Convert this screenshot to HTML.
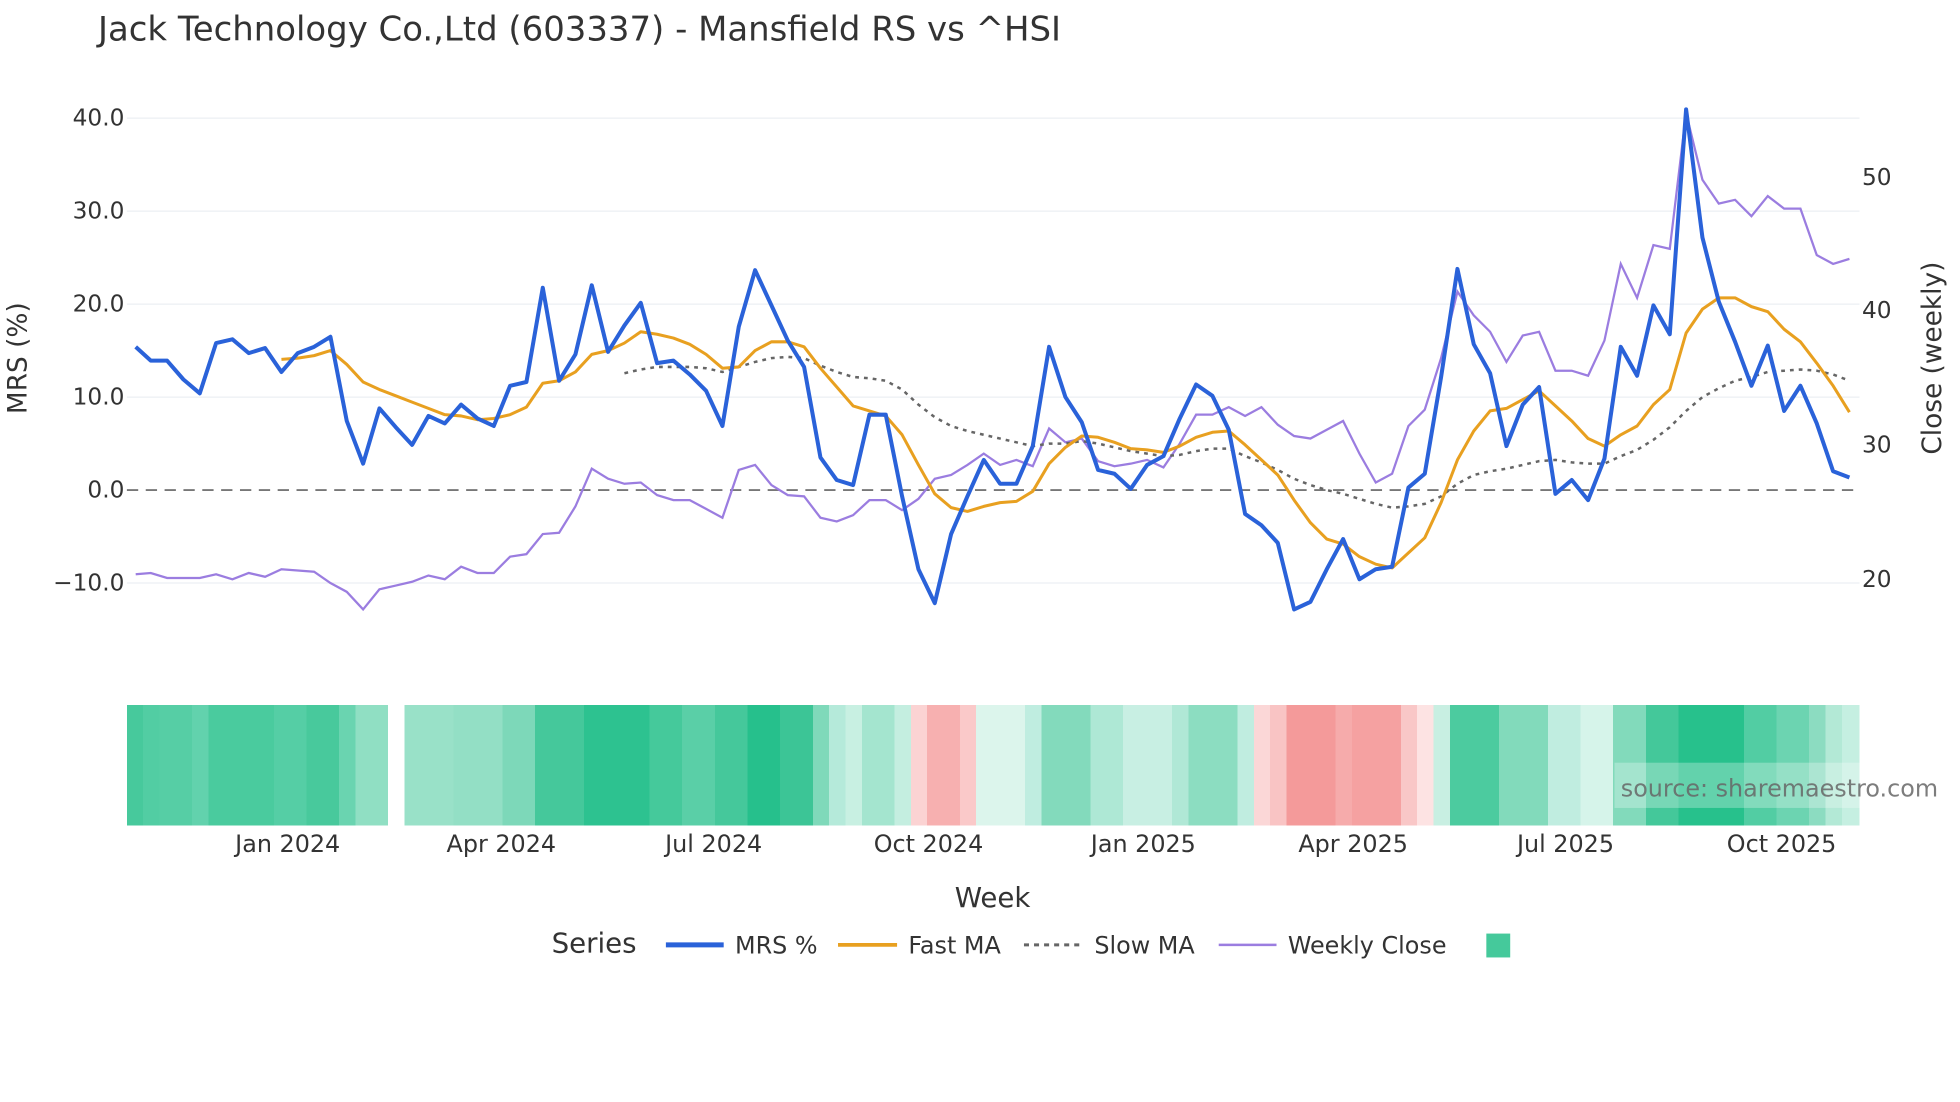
<!DOCTYPE html>
<html><head><meta charset="utf-8"><style>
html,body{margin:0;padding:0;background:#fff;width:1960px;height:1102px;overflow:hidden}
svg{display:block}
text{font-family:"DejaVu Sans","Liberation Sans",sans-serif;fill:#333}
</style></head><body>
<svg width="1960" height="1102" viewBox="0 0 1560 877" xmlns="http://www.w3.org/2000/svg">
<rect width="1560" height="877" fill="#fff"/>
<text x="78" y="32" font-size="27">Jack Technology Co.,Ltd (603337) - Mansfield RS vs ^HSI</text>
<g stroke="#eceff3" stroke-width="1">
<line x1="101" y1="94" x2="1480" y2="94"/><line x1="101" y1="168" x2="1480" y2="168"/>
<line x1="101" y1="242" x2="1480" y2="242"/><line x1="101" y1="316" x2="1480" y2="316"/>
<line x1="101" y1="464" x2="1480" y2="464"/>
</g>
<g font-size="18.5" text-anchor="end">
<text x="99" y="100">40.0</text><text x="99" y="174">30.0</text>
<text x="99" y="248">20.0</text><text x="99" y="322">10.0</text>
<text x="99" y="396">0.0</text><text x="99" y="470">−10.0</text>
</g>
<g font-size="18.5">
<text x="1482" y="147">50</text><text x="1482" y="253">40</text>
<text x="1482" y="360">30</text><text x="1482" y="467">20</text>
</g>
<text transform="translate(21,285) rotate(-90)" font-size="21" text-anchor="middle">MRS (%)</text>
<text transform="translate(1545,285) rotate(-90)" font-size="21" text-anchor="middle">Close (weekly)</text>
<line x1="101" y1="390" x2="1480" y2="390" stroke="#777" stroke-width="1.5" stroke-dasharray="9,6"/>
<polyline fill="none" stroke="#9b7de0" stroke-width="1.8" points="108,457 120,456 133,460 146,460 159,460 172,457 185,461 198,456 211,459 224,453 237,454 250,455 263,464 276,471 289,485 302,469 315,466 328,463 341,458 354,461 367,451 380,456 393,456 406,443 419,441 432,425 445,424 458,403 471,373 484,381 497,385 510,384 523,394 536,398 549,398 562,405 575,412 588,374 601,370 614,386 627,394 640,395 653,412 666,415 679,410 692,398 705,398 718,406 731,397 744,381 757,378 770,370 783,361 796,370 809,366 822,371 835,341 848,352 861,349 874,367 887,371 900,369 913,366 926,372 939,353 952,330 965,330 978,324 991,331 1004,324 1017,338 1030,347 1043,349 1056,342 1069,335 1082,361 1095,384 1108,377 1121,339 1134,326 1147,285 1160,232 1173,251 1186,264 1199,288 1212,267 1225,264 1238,295 1251,295 1264,299 1277,271 1290,210 1303,237 1316,195 1329,198 1342,90 1355,143 1368,162 1381,159 1394,172 1407,156 1420,166 1433,166 1446,203 1459,210 1472,206"/>
<polyline fill="none" stroke="#666" stroke-width="2" stroke-dasharray="3,4" points="497,297 510,294 523,292 536,292 549,292 562,293 575,296 588,292 601,288 614,285 627,284 640,285 653,291 666,296 679,300 692,301 705,303 718,310 731,322 744,332 757,339 770,343 783,346 796,349 809,352 822,355 835,353 848,353 861,351 874,353 887,356 900,359 913,361 926,363 939,362 952,359 965,357 978,357 991,363 1004,368 1017,374 1030,381 1043,386 1056,390 1069,393 1082,397 1095,401 1108,404 1121,403 1134,401 1147,395 1160,385 1173,378 1186,375 1199,373 1212,370 1225,367 1238,366 1251,368 1264,369 1277,369 1290,363 1303,358 1316,350 1329,340 1342,327 1355,316 1368,309 1381,303 1394,300 1407,296 1420,295 1433,294 1446,295 1459,298 1472,303"/>
<polyline fill="none" stroke="#e8a020" stroke-width="2.4" stroke-linejoin="round" points="224,286 237,285 250,283 263,279 276,290 289,304 302,310 315,315 328,320 341,325 354,330 367,331 380,334 393,333 406,330 419,324 432,305 445,303 458,296 471,282 484,279 497,273 510,264 523,266 536,269 549,274 562,282 575,293 588,292 601,279 614,272 627,272 640,276 653,293 666,308 679,323 692,327 705,331 718,346 731,370 744,393 757,404 770,407 783,403 796,400 809,399 822,391 835,369 848,356 861,347 874,348 887,352 900,357 913,358 926,360 939,355 952,348 965,344 978,343 991,354 1004,366 1017,378 1030,398 1043,416 1056,429 1069,433 1082,443 1095,449 1108,452 1121,440 1134,428 1147,400 1160,366 1173,343 1186,327 1199,325 1212,318 1225,311 1238,323 1251,335 1264,349 1277,355 1290,346 1303,339 1316,322 1329,310 1342,265 1355,246 1368,237 1381,237 1394,244 1407,248 1420,262 1433,272 1446,289 1459,307 1472,328"/>
<polyline fill="none" stroke="#2a62d9" stroke-width="3.2" stroke-linejoin="round" points="108,276 120,287 133,287 146,302 159,313 172,273 185,270 198,281 211,277 224,296 237,281 250,276 263,268 276,335 289,369 302,325 315,340 328,354 341,331 354,337 367,322 380,333 393,339 406,307 419,304 432,229 445,303 458,282 471,227 484,280 497,259 510,241 523,289 536,287 549,298 562,311 575,339 588,260 601,215 614,243 627,271 640,292 653,364 666,382 679,386 692,330 705,330 718,395 731,453 744,480 757,425 770,395 783,366 796,385 809,385 822,355 835,276 848,316 861,336 874,374 887,377 900,389 913,370 926,363 939,333 952,306 965,315 978,342 991,409 1004,418 1017,432 1030,485 1043,479 1056,453 1069,429 1082,461 1095,453 1108,451 1121,388 1134,377 1147,300 1160,214 1173,274 1186,297 1199,355 1212,322 1225,308 1238,393 1251,382 1264,398 1277,365 1290,276 1303,299 1316,243 1329,266 1342,87 1355,189 1368,240 1381,272 1394,307 1407,275 1420,327 1433,307 1446,337 1459,375 1472,380"/>
<g shape-rendering="crispEdges">
<rect x="101" y="561" width="14" height="96" fill="#47c99c"/><rect x="114" y="561" width="14" height="96" fill="#52cda3"/>
<rect x="127" y="561" width="27" height="96" fill="#56cea5"/><rect x="153" y="561" width="14" height="96" fill="#62d2ad"/>
<rect x="166" y="561" width="53" height="96" fill="#4acb9e"/><rect x="218" y="561" width="27" height="96" fill="#55cea5"/>
<rect x="244" y="561" width="27" height="96" fill="#48c99c"/><rect x="270" y="561" width="14" height="96" fill="#6ad4b0"/>
<rect x="283" y="561" width="26" height="96" fill="#90dfc3"/>
<rect x="322" y="561" width="40" height="96" fill="#99e1c8"/><rect x="361" y="561" width="40" height="96" fill="#93dfc5"/>
<rect x="400" y="561" width="27" height="96" fill="#7dd8b9"/><rect x="426" y="561" width="40" height="96" fill="#45c89b"/>
<rect x="465" y="561" width="53" height="96" fill="#2dc290"/><rect x="517" y="561" width="27" height="96" fill="#45c99b"/>
<rect x="543" y="561" width="27" height="96" fill="#5acfa7"/><rect x="569" y="561" width="27" height="96" fill="#45c89b"/>
<rect x="595" y="561" width="27" height="96" fill="#26c08c"/><rect x="621" y="561" width="27" height="96" fill="#3cc596"/>
<rect x="647" y="561" width="14" height="96" fill="#7fd9ba"/><rect x="660" y="561" width="14" height="96" fill="#b5eada"/>
<rect x="673" y="561" width="14" height="96" fill="#c8f0e2"/><rect x="686" y="561" width="27" height="96" fill="#a4e5cf"/>
<rect x="712" y="561" width="14" height="96" fill="#c4eee0"/><rect x="725" y="561" width="14" height="96" fill="#fbd3d3"/>
<rect x="738" y="561" width="27" height="96" fill="#f7b0b0"/><rect x="764" y="561" width="14" height="96" fill="#fac9c9"/>
<rect x="777" y="561" width="40" height="96" fill="#dcf5ec"/><rect x="816" y="561" width="14" height="96" fill="#bfede0"/>
<rect x="829" y="561" width="40" height="96" fill="#83dabc"/><rect x="868" y="561" width="27" height="96" fill="#aee8d5"/>
<rect x="894" y="561" width="40" height="96" fill="#c8efe3"/><rect x="933" y="561" width="14" height="96" fill="#b0e8d6"/>
<rect x="946" y="561" width="40" height="96" fill="#8cddc1"/><rect x="985" y="561" width="14" height="96" fill="#c0ede0"/>
<rect x="998" y="561" width="14" height="96" fill="#fbd7d7"/><rect x="1011" y="561" width="14" height="96" fill="#f9c4c4"/>
<rect x="1024" y="561" width="40" height="96" fill="#f49a9a"/><rect x="1063" y="561" width="14" height="96" fill="#f6abab"/>
<rect x="1076" y="561" width="40" height="96" fill="#f5a1a1"/><rect x="1115" y="561" width="14" height="96" fill="#f9c7c7"/>
<rect x="1128" y="561" width="14" height="96" fill="#fde3e3"/><rect x="1141" y="561" width="14" height="96" fill="#c8efe2"/>
<rect x="1154" y="561" width="40" height="96" fill="#4ccb9f"/><rect x="1193" y="561" width="40" height="96" fill="#82dabb"/>
<rect x="1232" y="561" width="27" height="96" fill="#c0ede0"/><rect x="1258" y="561" width="27" height="96" fill="#d6f4ea"/>
<rect x="1284" y="561" width="27" height="96" fill="#82dabb"/><rect x="1310" y="561" width="27" height="96" fill="#44c89a"/>
<rect x="1336" y="561" width="53" height="96" fill="#27c18c"/><rect x="1388" y="561" width="27" height="96" fill="#52cda3"/>
<rect x="1414" y="561" width="27" height="96" fill="#6cd4b1"/><rect x="1440" y="561" width="14" height="96" fill="#8cdcc1"/>
<rect x="1453" y="561" width="14" height="96" fill="#b3e9d6"/><rect x="1466" y="561" width="14" height="96" fill="#c5efe1"/>
</g>
<rect x="1285" y="607" width="195" height="36" fill="#fff" fill-opacity="0.28"/>
<text x="1290" y="634" font-size="19" style="fill:#666;fill-opacity:0.85">source: sharemaestro.com</text>
<g font-size="19" text-anchor="middle">
<text x="229" y="678">Jan 2024</text><text x="399" y="678">Apr 2024</text>
<text x="568" y="678">Jul 2024</text><text x="739" y="678">Oct 2024</text>
<text x="910" y="678">Jan 2025</text><text x="1077" y="678">Apr 2025</text>
<text x="1246" y="678">Jul 2025</text><text x="1418" y="678">Oct 2025</text>
</g>
<text x="790" y="722" font-size="22" text-anchor="middle">Week</text>
<text x="439" y="758" font-size="22">Series</text>
<line x1="530" y1="752" x2="576" y2="752" stroke="#2a62d9" stroke-width="4"/>
<text x="585" y="759" font-size="19">MRS %</text>
<line x1="667" y1="752" x2="714" y2="752" stroke="#e8a020" stroke-width="3"/>
<text x="723" y="759" font-size="19">Fast MA</text>
<line x1="815" y1="752" x2="860" y2="752" stroke="#666" stroke-width="2.4" stroke-dasharray="4,4"/>
<text x="871" y="759" font-size="19">Slow MA</text>
<line x1="970" y1="752" x2="1016" y2="752" stroke="#9b7de0" stroke-width="2"/>
<text x="1025" y="759" font-size="19">Weekly Close</text>
<rect x="1183" y="743" width="19" height="19" fill="#45c99b"/>
</svg>
</body></html>
